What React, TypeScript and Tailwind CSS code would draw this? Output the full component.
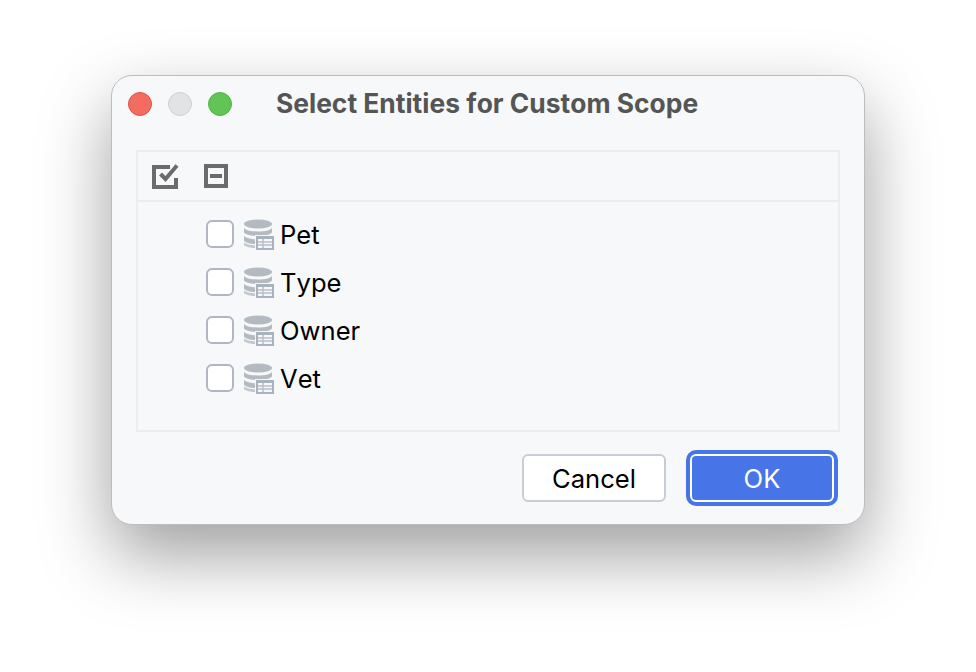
/**
 * Select Entities dialog (macOS style IDE window)
 */

const entities = ['Pet', 'Type', 'Owner', 'Vet'];

function CheckAllIcon() {
  return (
    <svg width="28" height="26" viewBox="0 0 28 26" fill="none" aria-hidden="true">
      <path d="M24 15v9H2V4h16" stroke="#6b6b6b" strokeWidth="4" strokeLinecap="butt" />
      <path d="M8.500 11l5 5L25 2.500" stroke="#6b6b6b" strokeWidth="4" />
    </svg>
  );
}

function UncheckAllIcon() {
  return (
    <svg width="24" height="24" viewBox="0 0 24 24" fill="none" aria-hidden="true">
      <rect x="2" y="2" width="20" height="20" stroke="#6b6b6b" strokeWidth="4" />
      <rect x="6" y="10" width="12" height="4" fill="#6b6b6b" />
    </svg>
  );
}

function EntityIcon() {
  return (
    <svg width="32" height="32" viewBox="0 0 32 32" aria-hidden="true">
      <ellipse cx="15" cy="6" rx="14" ry="4.500" fill="#b3bac2" />
      <path d="M1 10c2 2.500 7 3.500 14 3.500S27 12.500 29 10v4c0 2-6 4-14 4S1 16 1 14z" fill="#b3bac2" />
      <path d="M1 18c2 2 6 3 12 3.500V26C7 26 1 24.500 1 22z" fill="#b3bac2" />
      <path d="M1 24.500c2 1.500 6 2.500 12 3V30C7 30 1 28.500 1 27z" fill="#c3c8ce" />
      <rect x="12" y="17" width="20" height="15" fill="#f6f7f9" />
      <rect x="13" y="18" width="18" height="14" fill="#a9b3bc" />
      <rect x="15" y="21" width="14" height="9" fill="#f6f7f9" />
      <path d="M15 24h14M15 27h14M20 21v9" stroke="#b9c0c7" strokeWidth="1.500" />
    </svg>
  );
}

export default function App() {
  return (
    <div className="h-[672px] w-[976px] overflow-hidden bg-white pt-[75px] font-['Inter','Liberation_Sans',sans-serif] [font-kerning:none]">
      <div className="mx-auto flex h-[450px] w-[754px] flex-col rounded-[21px] border border-[#bdbdbf] bg-[#f7f8fa] shadow-[0_30px_70px_rgba(0,0,0,0.38)]">
        {/* title bar */}
        <div className="flex h-[74px] shrink-0 items-start pt-[16px] pl-[16px]">
          <div className="flex gap-4">
            <span className="h-6 w-6 rounded-full border border-[#e0524a] bg-[#f36c60]" />
            <span className="h-6 w-6 rounded-full border border-[#cfcfd1] bg-[#e2e3e5]" />
            <span className="h-6 w-6 rounded-full border border-[#52b346] bg-[#60c554]" />
          </div>
          <div className="-mt-px ml-[44px] text-[26.400px] leading-6 font-bold text-[#555555]">
            Select Entities for Custom Scope
          </div>
        </div>

        {/* entity tree */}
        <div className="mx-[24px] flex h-[282px] flex-col border-2 border-[#ebedf0]">
          <div className="flex h-[50px] shrink-0 items-center gap-[24px] border-b-2 border-[#ebedf0] pl-[14px]">
            <CheckAllIcon />
            <UncheckAllIcon />
          </div>
          <div className="flex flex-col pt-[8px] pl-[68px]">
            {entities.map((name) => (
              <div key={name} className="flex h-12 items-center">
                <span className="h-7 w-7 rounded-[6px] border-2 border-[#b1b6c5] bg-white" />
                <span className="ml-[9px]">
                  <EntityIcon />
                </span>
                <span className="mt-[2px] ml-[5px] text-[25.600px] leading-none text-black">{name}</span>
              </div>
            ))}
          </div>
        </div>

        {/* buttons */}
        <div className="flex items-start justify-end gap-5 pt-[18px] pr-[26px]">
          <button className="mt-[4px] h-12 w-[144px] rounded-[6px] border-2 border-[#c9ccd6] bg-white pt-[2px] text-[25.600px] leading-none text-black">
            Cancel
          </button>
          <button className="h-14 w-[152px] rounded-[10px] bg-[#4775e7] p-1">
            <span className="flex h-full w-full items-center justify-center rounded-[6px] border-2 border-white pt-[2px] text-[25.600px] leading-none text-white">
              OK
            </span>
          </button>
        </div>
      </div>
    </div>
  );
}
